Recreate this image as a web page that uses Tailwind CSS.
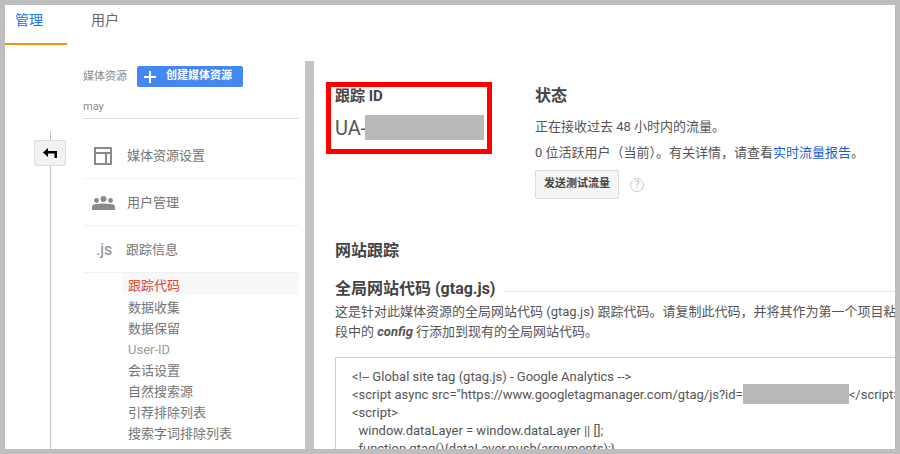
<!DOCTYPE html>
<html><head><meta charset="utf-8"><script src="https://cdn.jsdelivr.net/npm/@tailwindcss/browser@4"></script></head>
<body class="m-0 bg-white">
<div class="w-[900px] h-[454px] overflow-hidden border-[5px] border-[#bebebe] bg-white font-['Roboto','Noto_Sans_CJK_SC',sans-serif] text-[#666] flex flex-col">
  <div class="h-[40px] flex shrink-0 text-[14px] leading-[20px]">
    <div class="w-[62px] h-[40px] border-b-2 border-[#f59300] pl-[10px] pt-[5px] text-[#1a73e8]">管理</div>
    <div class="pl-[24px] pt-[5px] text-[#666]">用户</div>
  </div>
  <div class="flex flex-1 min-h-0">
    <div class="w-[78px] shrink-0 relative">
      <div class="absolute left-[45px] top-[86px] bottom-0 w-px bg-[#c4c4c4]"></div>
      <div class="absolute left-[29px] top-[95px] w-[32px] h-[26px] bg-[#f1f1f1] border border-[#dcdcdc] rounded-[2px] flex items-center justify-center">
        <svg width="14" height="10" viewBox="0 0 14 10"><path d="M0 4.500 5 0v3h9v7h-2.500V5.400H5V9Z" fill="#000"/></svg>
      </div>
    </div>
    <div class="w-[216px] shrink-0 pt-[21px]">
      <div class="flex items-center h-[21px] gap-[10px] text-[11px] text-[#8a8a8a]">
        <span class="w-[44px] whitespace-nowrap pt-[1px]">媒体资源</span>
        <div class="w-[106px] h-[21px] bg-[#4688f1] rounded-[2px] flex items-center pl-[7px] text-white text-[11px] font-bold">
          <svg width="12" height="12" viewBox="0 0 12 12" class="mr-[10px]"><path d="M5 0h2v5h5v2H7v5H5V7H0V5h5Z" fill="#fff"/></svg>
          <span class="whitespace-nowrap">创建媒体资源</span>
        </div>
      </div>
      <div class="h-[32px] pt-[12px] text-[11px] leading-[15px] text-[#8a8a8a] border-b border-[#dcdcdc]">may</div>
      <div class="h-[60px] pt-[14px] border-b border-[#f1f1f1] flex items-center ml-[1px] text-[13px] text-[#757575]">
        <svg width="18" height="18" viewBox="0 0 18 18" class="ml-[10px] mr-[15px]"><path d="M1 1h16v16H1ZM1 6h16M12 6v11" fill="none" stroke="#8a8a8a" stroke-width="2"/></svg>
        <span>媒体资源设置</span>
      </div>
      <div class="h-[47px] pt-[2px] border-b border-[#f1f1f1] flex items-center ml-[1px] text-[13px] text-[#757575]">
        <svg width="23" height="14" viewBox="0 0 23 14" class="ml-[8px] mr-[12px]"><g fill="#8a8a8a"><circle cx="11.5" cy="3" r="3"/><circle cx="4.5" cy="4.5" r="2.4"/><circle cx="18.5" cy="4.5" r="2.4"/><path d="M0 14v-3q0-3 4.500-3 7-1 14 0 4.500 0 4.500 3v3Z"/></g></svg>
        <span>用户管理</span>
      </div>
      <div class="h-[47px] pt-[2px] flex items-center ml-[1px] text-[13px] text-[#757575] border-b border-[#f1f1f1]">
        <span class="w-[42px] pl-[12px] text-[16px] text-[#8a8a8a]">.js</span>
        <span>跟踪信息</span>
      </div>
      <div class="ml-[39px] text-[13px] leading-[21px] text-[#757575]">
        <div class="bg-[#f8f8f8] h-[22px] leading-[26px] pl-[6px] text-[#db4437]">跟踪代码</div>
        <div class="pl-[6px] mt-[2px]">数据收集</div>
        <div class="pl-[6px]">数据保留</div>
        <div class="pl-[6px] text-[#9a9a9a]">User-ID</div>
        <div class="pl-[6px]">会话设置</div>
        <div class="pl-[6px]">自然搜索源</div>
        <div class="pl-[6px]">引荐排除列表</div>
        <div class="pl-[6px]">搜索字词排除列表</div>
      </div>
    </div>
    <div class="w-[9px] ml-[6px] mt-[16px] shrink-0 bg-[#c4c4c4]"></div>
    <div class="flex-1 min-w-0 overflow-hidden pl-[21px] pt-[41px] text-[#444]">
      <div class="flex">
        <div class="w-[200px] relative">
          <div class="absolute -left-[9px] -top-[4px] w-[166px] h-[72px] border-[5px] border-[#f00]"></div>
          <div class="text-[15px] leading-[20px] font-bold text-[#444]">跟踪 ID</div>
          <div class="mt-[9px] flex items-center h-[25px] text-[20px] text-[#555]">UA-<span class="w-[119px] h-[25px] bg-[#b9b9b9] -ml-[1px]"></span></div>
        </div>
        <div class="text-[13px] text-[#555]">
          <div class="text-[16px] leading-[20px] font-bold text-[#444] mb-[12px]">状态</div>
          <div class="leading-[18px] mb-[8px] whitespace-nowrap">正在接收过去 48 小时内的流量。</div>
          <div class="leading-[18px] mb-[8px] whitespace-nowrap">0 位活跃用户（当前）。有关详情，请查看<span class="text-[#1a5fd8]">实时流量报告</span>。</div>
          <div class="flex items-center">
            <div class="w-[84px] h-[29px] bg-[#f5f5f5] border border-[#dcdcdc] rounded-[2px] flex items-center justify-center text-[11px] font-bold text-[#444]">发送测试流量</div>
            <div class="ml-[11px] w-[14px] h-[14px] rounded-full border border-[#ccc] text-[#bbb] text-[10px] leading-[12px] text-center">?</div>
          </div>
        </div>
      </div>
      <div class="mt-[41px] text-[16px] leading-[22px] font-bold text-[#444]">网站跟踪</div>
      <div class="mt-[16px] flex items-center whitespace-nowrap">
        <span class="text-[16px] leading-[22px] font-bold text-[#444]">全局网站代码 (gtag.js)</span>
        <div class="flex-1 h-px bg-[#e4e4e4] ml-[10px] mt-[4px]"></div>
      </div>
      <div class="mt-[2px] text-[13px] leading-[20px] text-[#555] whitespace-nowrap overflow-hidden">这是针对此媒体资源的全局网站代码 (gtag.js) 跟踪代码。请复制此代码，并将其作为第一个项目粘贴到<br>段中的 <b><i>config</i></b> 行添加到现有的全局网站代码。</div>
      <div class="mt-[15px] h-[120px] w-[700px] border border-[#cfcfcf] pl-[16px] pt-[10px] text-[13px] leading-[18px] text-[#555] whitespace-pre overflow-hidden">&lt;!-- Global site tag (gtag.js) - Google Analytics --&gt;
&lt;script async src="https://www.googletagmanager.com/gtag/js?id=<span class="inline-block w-[106px] h-[20px] -mt-[2px] bg-[#b9b9b9] align-top"></span>&lt;/script&gt;
&lt;script&gt;
  window.dataLayer = window.dataLayer || [];
  function gtag(){dataLayer.push(arguments);}</div>
    </div>
  </div>
</div>
</body></html>
